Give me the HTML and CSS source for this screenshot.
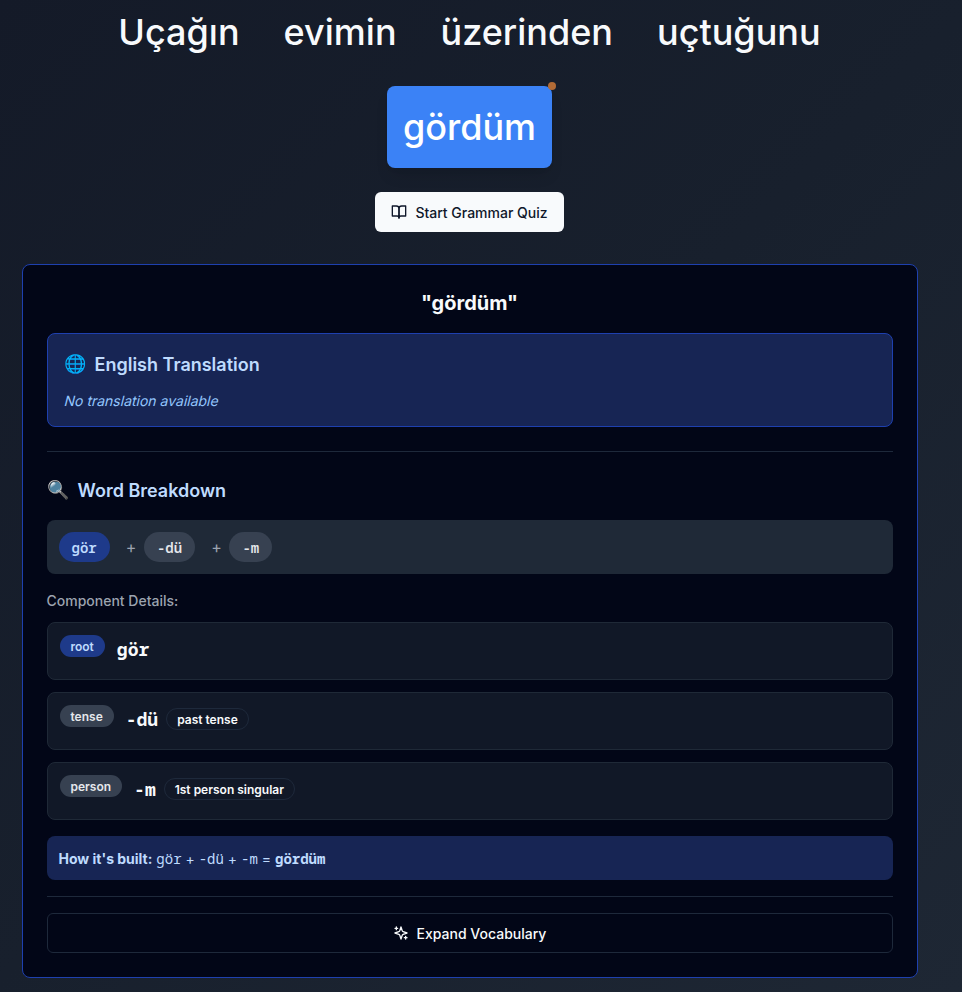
FILE: index.html
```html
<!DOCTYPE html>
<html lang="en">
<head>
<meta charset="utf-8">
<title>Grammar Explorer</title>
<link rel="stylesheet" href="styles.css">
</head>
<body>
<main class="page">
  <div class="sentence">
    <span class="word">Uçağın</span>
    <span class="word">evimin</span>
    <span class="word">üzerinden</span>
    <span class="word">uçtuğunu</span>
    <span class="word word-active">gördüm<i class="dot"></i></span>
  </div>
  <button class="btn btn-quiz">
    <svg class="icon" viewBox="0 0 24 24"><path d="M2 3h6a4 4 0 0 1 4 4v14a3 3 0 0 0-3-3H2z"/><path d="M22 3h-6a4 4 0 0 0-4 4v14a3 3 0 0 1 3-3h7z"/></svg>
    <span class="text">Start Grammar Quiz</span>
  </button>
  <section class="card">
    <h2 class="card-title">"gördüm"</h2>
    <div class="translation">
      <h3 class="heading"><span class="emoji">🌐</span><span class="text">English Translation</span></h3>
      <p class="empty">No translation available</p>
    </div>
    <hr class="rule">
    <h3 class="heading heading-breakdown"><span class="emoji">🔍</span><span class="text">Word Breakdown</span></h3>
    <div class="parts">
      <span class="part part-root">gör</span><span class="plus">+</span>
      <span class="part">-dü</span><span class="plus">+</span>
      <span class="part">-m</span>
    </div>
    <h4 class="label">Component Details:</h4>
    <div class="details">
      <div class="detail"><span class="badge badge-root">root</span><span class="morpheme">gör</span></div>
      <div class="detail"><span class="badge">tense</span><span class="morpheme">-dü</span><span class="badge badge-outline">past tense</span></div>
      <div class="detail"><span class="badge">person</span><span class="morpheme">-m</span><span class="badge badge-outline">1st person singular</span></div>
    </div>
    <p class="built"><strong>How it's built:</strong> <span class="mono">gör</span> + <span class="mono">-dü</span> + <span class="mono">-m</span> = <strong class="mono">gördüm</strong></p>
    <hr class="rule rule-last">
    <button class="btn btn-expand">
      <svg class="icon" viewBox="0 0 24 24"><path d="m12 3-1.912 5.813a2 2 0 0 1-1.275 1.275L3 12l5.813 1.912a2 2 0 0 1 1.275 1.275L12 21l1.912-5.813a2 2 0 0 1 1.275-1.275L21 12l-5.813-1.912a2 2 0 0 1-1.275-1.275L12 3Z"/><path d="M5 3v4M19 17v4M3 5h4M17 19h4"/></svg>
      <span class="text">Expand Vocabulary</span>
    </button>
  </section>
</main>
</body>
</html>
```
FILE: styles.css
```css
* { box-sizing: border-box; margin: 0; padding: 0; }
body {
  height: 992px;
  overflow: hidden;
  font-family: Inter, "Liberation Sans", sans-serif;
  font-size: 14px;
  line-height: 20px;
  color: #f8fafc;
  background: linear-gradient(135deg, #141a28, #18202d 50%, #1e2734);
}
.page { width: 939px; display: flex; flex-direction: column; align-items: center; }
.sentence { display: flex; flex-wrap: wrap; justify-content: center; column-gap: 12px; row-gap: 13px; width: 896px; margin-top: -9px; }
.word { position: relative; padding: 12px 16px; border-radius: 8px; font-size: 36px; line-height: 58px; font-weight: 500; }
.word-active { background: #3b82f6; color: #fff; box-shadow: 0 10px 15px -3px rgba(0,0,0,.1), 0 4px 6px -4px rgba(0,0,0,.1); }
.dot { position: absolute; top: -4px; right: -4px; width: 8px; height: 8px; border-radius: 50%; background: #b26b36; }
.btn { display: flex; align-items: center; justify-content: center; gap: 8px; height: 40px; border-radius: 6px; font: 500 14px/20px Inter, "Liberation Sans", sans-serif; }
.text { padding-top: 2px; }
.btn-quiz { margin-top: 24px; padding: 0 16px; border: 0; background: #f8fafc; color: #0f172a; }
.icon { width: 16px; height: 16px; fill: none; stroke: currentColor; stroke-width: 2; stroke-linecap: round; stroke-linejoin: round; }
.card { width: 896px; height: 714px; margin-top: 32px; padding: 24px; border: 1px solid #1e40af; border-radius: 8px; background: #020617; }
.card-title { height: 28px; font-size: 20px; line-height: 29px; font-weight: 700; text-align: center; }
.translation { margin-top: 16px; height: 94px; padding: 16px; border: 1px solid #1e40af; border-radius: 8px; background: #172554; }
.heading { display: flex; align-items: center; gap: 8px; height: 28px; font-size: 18px; line-height: 28px; font-weight: 600; color: #bfdbfe; }
.empty { width: max-content; margin-top: 13px; color: #93c5fd; line-height: 20px; transform: skewX(-14deg); transform-origin: 0 13px; }
.emoji { width: 23px; }
.rule { margin-top: 24px; border: 0; height: 1px; background: #1e293b; }
.heading-breakdown { margin-top: 24px; }
.parts { display: flex; align-items: center; gap: 8px; margin-top: 16px; height: 54px; padding: 12px; border-radius: 8px; background: #1f2937; }
.part { height: 30px; padding: 6px 13px 4px; border-radius: 15px; background: #374151; color: #e5e7eb; font-family: "Noto Sans Mono", "Liberation Mono", monospace; font-weight: 600; }
.part-root { background: #1e3a8a; color: #bfdbfe; }
.plus { width: 10.25px; margin-left: 8px; font-size: 16px; color: #9ca3af; }
.label { margin-top: 17px; font-weight: 500; color: #9ca3af; }
.details { display: grid; gap: 12px; margin-top: 11px; }
.detail { display: flex; align-items: flex-start; height: 58px; padding: 12px; border: 1px solid #1f2937; border-radius: 8px; background: #111827; }
.badge { height: 22px; padding: 4px 11px 2px; border-radius: 11px; font-size: 12px; line-height: 16px; font-weight: 600; background: #374151; color: #e5e7eb; }
.badge-root { background: #1e3a8a; color: #bfdbfe; }
.morpheme { margin-left: 12px; font: 700 18px/28px "Noto Sans Mono", "Liberation Mono", monospace; }
.badge-outline { margin: 3px 0 0 8px; padding: 3px 10px 1px; border: 1px solid #1e293b; background: none; color: #f8fafc; }
.built { margin-top: 16px; height: 44px; padding: 13px 12px 11px; border-radius: 8px; background: #172554; color: #bfdbfe; }
.mono { font-family: "Noto Sans Mono", "Liberation Mono", monospace; }
.rule-last { margin-top: 16px; }
.btn-expand { width: 100%; margin-top: 16px; border: 1px solid #1e293b; background: #020617; color: #f8fafc; }
```
